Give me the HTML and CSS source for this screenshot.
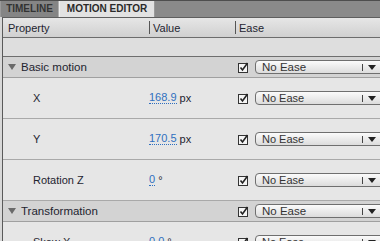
FILE: index.html
```html
<!DOCTYPE html>
<html>
<head>
<meta charset="utf-8">
<link rel="stylesheet" href="styles.css">
</head>
<body>
<div class="tabbar">
  <div class="tab">TIMELINE</div>
  <div class="tab active">MOTION EDITOR</div>
</div>
<div class="panel">
  <div class="row header">
    <div class="c1">Property</div>
    <div class="c2"><span class="sep"></span>Value</div>
    <div class="c3"><span class="sep"></span>Ease</div>
  </div>
  <div class="row empty"></div>

  <div class="row group">
    <div class="c1"><span class="tri"></span>Basic motion</div>
    <div class="c2"></div>
    <div class="c3 ease"><span class="chk"><svg width="11" height="11" viewBox="0 0 11 11"><rect x="0.5" y="1.5" width="9" height="9" fill="#f4f4f4" stroke="#333"/><path d="M2.5 5.5 L4.5 8 L9.5 1" fill="none" stroke="#222" stroke-width="1.6"/></svg></span><span class="dd"><span class="ddtext">No Ease</span><span class="ddbar"></span><span class="ddarrow"></span></span></div>
  </div>

  <div class="row prop">
    <div class="c1">X</div>
    <div class="c2"><span class="val">168.9</span> px</div>
    <div class="c3 ease"><span class="chk"><svg width="11" height="11" viewBox="0 0 11 11"><rect x="0.5" y="1.5" width="9" height="9" fill="#f4f4f4" stroke="#333"/><path d="M2.5 5.5 L4.5 8 L9.5 1" fill="none" stroke="#222" stroke-width="1.6"/></svg></span><span class="dd"><span class="ddtext">No Ease</span><span class="ddbar"></span><span class="ddarrow"></span></span></div>
  </div>

  <div class="row prop">
    <div class="c1">Y</div>
    <div class="c2"><span class="val">170.5</span> px</div>
    <div class="c3 ease"><span class="chk"><svg width="11" height="11" viewBox="0 0 11 11"><rect x="0.5" y="1.5" width="9" height="9" fill="#f4f4f4" stroke="#333"/><path d="M2.5 5.5 L4.5 8 L9.5 1" fill="none" stroke="#222" stroke-width="1.6"/></svg></span><span class="dd"><span class="ddtext">No Ease</span><span class="ddbar"></span><span class="ddarrow"></span></span></div>
  </div>

  <div class="row prop">
    <div class="c1">Rotation Z</div>
    <div class="c2"><span class="val">0</span> °</div>
    <div class="c3 ease"><span class="chk"><svg width="11" height="11" viewBox="0 0 11 11"><rect x="0.5" y="1.5" width="9" height="9" fill="#f4f4f4" stroke="#333"/><path d="M2.5 5.5 L4.5 8 L9.5 1" fill="none" stroke="#222" stroke-width="1.6"/></svg></span><span class="dd"><span class="ddtext">No Ease</span><span class="ddbar"></span><span class="ddarrow"></span></span></div>
  </div>

  <div class="row group">
    <div class="c1"><span class="tri"></span>Transformation</div>
    <div class="c2"></div>
    <div class="c3 ease"><span class="chk"><svg width="11" height="11" viewBox="0 0 11 11"><rect x="0.5" y="1.5" width="9" height="9" fill="#f4f4f4" stroke="#333"/><path d="M2.5 5.5 L4.5 8 L9.5 1" fill="none" stroke="#222" stroke-width="1.6"/></svg></span><span class="dd"><span class="ddtext">No Ease</span><span class="ddbar"></span><span class="ddarrow"></span></span></div>
  </div>

  <div class="row prop">
    <div class="c1">Skew X</div>
    <div class="c2"><span class="val">0.0</span> °</div>
    <div class="c3 ease"><span class="chk"><svg width="11" height="11" viewBox="0 0 11 11"><rect x="0.5" y="1.5" width="9" height="9" fill="#f4f4f4" stroke="#333"/><path d="M2.5 5.5 L4.5 8 L9.5 1" fill="none" stroke="#222" stroke-width="1.6"/></svg></span><span class="dd"><span class="ddtext">No Ease</span><span class="ddbar"></span><span class="ddarrow"></span></span></div>
  </div>
</div>
</body>
</html>
```

FILE: styles.css
```css
html, body {
  margin: 0;
  padding: 0;
  overflow: hidden;
}
body {
  width: 380px;
  height: 241px;
  background: #d8d8d8;
  font-family: "Liberation Sans", Arial, sans-serif;
  font-size: 11px;
  color: #1e2430;
}
.tabbar {
  height: 17px;
  background: #8a8a8a;
  border-top: 1px solid #4e4e4e;
  display: flex;
  box-sizing: border-box;
}
.tab {
  width: 59px;
  box-sizing: border-box;
  border-right: 1px solid #b0b0b0;
  border-left: 1px solid #9a9a9a;
  background: #858585;
  color: #333;
  font-weight: bold;
  font-size: 10px;
  line-height: 16px;
  text-align: center;
}
.tab.active {
  width: 96px;
  background: #e2e2e2;
  color: #2a2a2a;
  border-left: 1px solid #f0f0f0;
  border-right: 1px solid #9a9a9a;
}
.panel {
  margin-left: 2px;
  border-left: 1px solid #5a5a5a;
  border-top: 1px solid #5e5e5e;
  background: #e6e6e6;
}
.row {
  display: grid;
  grid-template-columns: 142px 90px 1fr;
  align-items: center;
  border-bottom: 1px solid #a9a9a9;
  box-sizing: border-box;
}
.c1, .c2, .c3 {
  display: flex;
  align-items: center;
  height: 100%;
  white-space: nowrap;
}
.header {
  height: 20px;
  background: linear-gradient(#e6e6e6, #d0d0d0);
  border-bottom: 1px solid #6c6c6c;
  color: #1e2430;
}
.header .c1 { padding-left: 5px; }
.sep {
  width: 1px;
  height: 13px;
  background: #555;
  margin-right: 3px;
}
.empty {
  height: 19px;
  background: #dedede;
  border-bottom: 1px solid #6e6e6e;
}
.group {
  height: 21px;
  background: #d3d3d3;
  border-bottom: 1px solid #a0a0a0;
  font-size: 11.5px;
}
.group .c1 { padding-left: 5px; }
.tri {
  width: 0;
  height: 0;
  border-left: 4px solid transparent;
  border-right: 4px solid transparent;
  border-top: 6px solid #6a6a6a;
  margin-right: 5px;
}
.prop {
  height: 41px;
  background: #e6e6e6;
}
.prop .c1 { padding-left: 30px; }
.c2 { padding-left: 4px; }
.val {
  color: #2f6fbf;
  border-bottom: 1px dotted #2f6fbf;
  line-height: 11px;
  margin-right: 3px;
}
.ease { padding-left: 3px; }
.chk {
  display: flex;
  width: 11px;
  height: 11px;
  margin-right: 6px;
}
.dd {
  display: flex;
  align-items: center;
  width: 135px;
  height: 14px;
  box-sizing: border-box;
  border: 1px solid #6f6f6f;
  border-radius: 4px;
  background: linear-gradient(#fbfbfb, #dcdcdc);
  flex-shrink: 0;
  color: #333;
}
.ddtext {
  padding-left: 6px;
  flex: 1;
}
.ddbar {
  width: 1px;
  height: 7px;
  background: #444;
  margin-right: 5px;
}
.ddarrow {
  width: 0;
  height: 0;
  border-left: 4px solid transparent;
  border-right: 4px solid transparent;
  border-top: 5px solid #222;
  margin-right: 13px;
}
```
